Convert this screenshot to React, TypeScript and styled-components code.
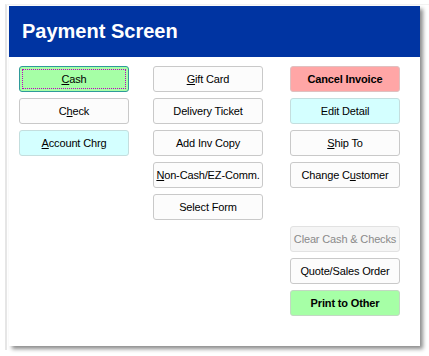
import React, { FC } from "react";
import styled, { createGlobalStyle, css } from "styled-components";

const GlobalStyle = createGlobalStyle`
  html, body {
    margin: 0;
    padding: 0;
    background: #ffffff;
  }
  body {
    font-family: "Liberation Sans", Arial, sans-serif;
  }
`;

const Page = styled.div`
  width: 429px;
  height: 356px;
  box-sizing: border-box;
  padding: 4px 0 0 5px;
`;

/* faint edge of the window behind */
const BackEdge = styled.div`
  height: 344px;
  border-left: 2px solid #e6e6e6;
  border-top: 1px solid #f2f2f2;
  padding: 1px 0 0 2px;
`;

const Window = styled.div`
  width: 411px;
  height: 340px;
  background: #ffffff;
  box-shadow: 3px 3px 4px rgba(0, 0, 0, 0.45);
  display: flex;
  flex-direction: column;
`;

const Header = styled.div`
  height: 51px;
  background: #0034a2;
  display: flex;
  align-items: center;
  padding-left: 13px;
`;

const Title = styled.h1`
  margin: 0;
  color: #ffffff;
  font-family: "Liberation Sans", Arial, sans-serif;
  font-size: 20px;
  font-weight: bold;
`;

const Body = styled.div`
  display: flex;
  padding: 9px 0 0 10px;
`;

const Column = styled.div<{ $offset?: number }>`
  width: 110px;
  margin-left: ${(p) => p.$offset ?? 0}px;
  display: flex;
  flex-direction: column;
  gap: 6px;
`;

const Spacer = styled.div`
  height: 26px;
`;

type Tone = "plain" | "green" | "red" | "cyan" | "disabled";

const tones: Record<Tone, ReturnType<typeof css>> = {
  plain: css`
    background: #fcfcfc;
    border-color: #c9c9c9;
    color: #000;
  `,
  green: css`
    background: #a6ffa6;
    border-color: #c2d9c2;
    color: #000;
  `,
  red: css`
    background: #ffa6a6;
    border-color: #e0c0c0;
    color: #000;
  `,
  cyan: css`
    background: #d4ffff;
    border-color: #c4dede;
    color: #000;
  `,
  disabled: css`
    background: #f5f5f5;
    border-color: #e2e2e2;
    color: #8a8a8a;
  `,
};

const Btn = styled.button<{ $tone?: Tone; $bold?: boolean; $focus?: boolean }>`
  height: 26px;
  width: 110px;
  box-sizing: border-box;
  border: 1px solid;
  border-radius: 3px;
  padding: 0;
  font-family: "Liberation Sans", Arial, sans-serif;
  font-size: 11px;
  font-weight: ${(p) => (p.$bold ? "bold" : "normal")};
  letter-spacing: -0.15px;
  white-space: nowrap;
  cursor: default;
  ${(p) => tones[p.$tone ?? "plain"]}
  ${(p) =>
    p.$focus &&
    css`
      border-color: #2f9a9a;
      outline: 1px dotted #c000c0;
      outline-offset: -4px;
    `}
`;

const U = styled.span`
  text-decoration: underline;
`;

const App: FC = () => (
  <>
    <GlobalStyle />
    <Page>
      <BackEdge>
        <Window>
          <Header>
            <Title>Payment Screen</Title>
          </Header>
          <Body>
            <Column>
              <Btn $tone="green" $focus>
                <U>C</U>ash
              </Btn>
              <Btn>
                C<U>h</U>eck
              </Btn>
              <Btn $tone="cyan">
                <U>A</U>ccount Chrg
              </Btn>
            </Column>
            <Column $offset={24}>
              <Btn>
                <U>G</U>ift Card
              </Btn>
              <Btn>Delivery Ticket</Btn>
              <Btn>Add Inv Copy</Btn>
              <Btn>
                <U>N</U>on-Cash/EZ-Comm.
              </Btn>
              <Btn>Select Form</Btn>
            </Column>
            <Column $offset={27}>
              <Btn $tone="red" $bold>
                Cancel Invoice
              </Btn>
              <Btn $tone="cyan">Edit Detail</Btn>
              <Btn>
                <U>S</U>hip To
              </Btn>
              <Btn>
                Change C<U>u</U>stomer
              </Btn>
              <Spacer />
              <Btn $tone="disabled" disabled>
                Clear Cash &amp; Checks
              </Btn>
              <Btn>Quote/Sales Order</Btn>
              <Btn $tone="green" $bold>
                Print to Other
              </Btn>
            </Column>
          </Body>
        </Window>
      </BackEdge>
    </Page>
  </>
);

export default App;
